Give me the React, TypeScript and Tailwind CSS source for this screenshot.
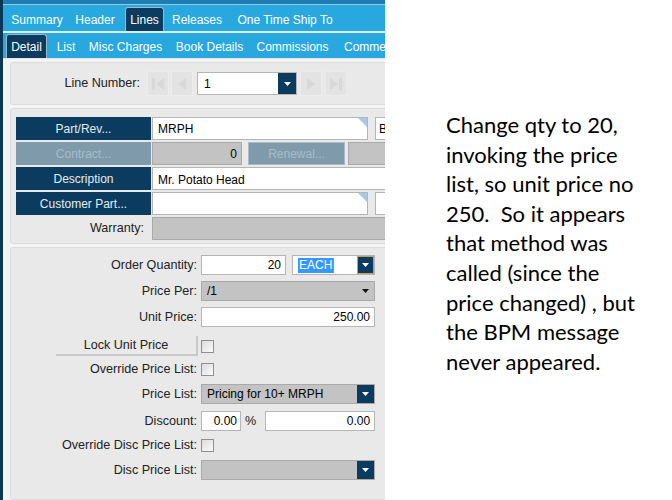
import React from "react";

const navy = "bg-[#0b3b5e]";

function Caret({ dark }: { dark?: boolean }) {
  return (
    <svg width="7" height="4" viewBox="0 0 7 4">
      <path d="M0 0 H7 L3.5 4 Z" fill={dark ? "#111" : "#fff"} />
    </svg>
  );
}

function NavBtn({ kind }: { kind: "first" | "prev" | "next" | "last" }) {
  return (
    <div className="w-[22px] h-[25px] shrink-0 bg-[#e3e3e3] border border-[#ececec] flex items-center justify-center">
      <svg width="14" height="16" viewBox="0 0 14 16">
        {kind === "first" && (
          <>
            <rect x="1" y="2" width="3" height="12" fill="#d8d8d8" />
            <path d="M13 2 L5 8 L13 14 Z" fill="#d8d8d8" />
          </>
        )}
        {kind === "prev" && <path d="M11 2 L3 8 L11 14 Z" fill="#d8d8d8" />}
        {kind === "next" && <path d="M3 2 L11 8 L3 14 Z" fill="#d8d8d8" />}
        {kind === "last" && (
          <>
            <path d="M1 2 L9 8 L1 14 Z" fill="#d8d8d8" />
            <rect x="10" y="2" width="3" height="12" fill="#d8d8d8" />
          </>
        )}
      </svg>
    </div>
  );
}

function Corner() {
  return (
    <svg className="absolute top-0 right-0" width="9" height="9" viewBox="0 0 9 9">
      <path d="M0 0 H9 V9 Z" fill="#a9c6e2" />
    </svg>
  );
}

function Check() {
  return <div className="w-[13px] h-[13px] shrink-0 border border-[#8f8f8f] bg-gradient-to-br from-[#dcdcdc] to-[#fafafa]" />;
}

function Label({ children, w = "w-[190px]" }: { children: React.ReactNode; w?: string }) {
  return (
    <div className={`${w} shrink-0 text-right pr-[4px] text-[#222] text-[12.6px] whitespace-nowrap`}>{children}</div>
  );
}

export default function App() {
  const tabs1 = [
    { label: "Summary", w: "w-[64px]" },
    { label: "Header", w: "w-[52px]" },
  ];
  const tabs1b = [
    { label: "Releases", w: "w-[66px]" },
    { label: "One Time Ship To", w: "w-[110px]" },
  ];
  const tabs2 = [
    { label: "List", w: "w-[38px]" },
    { label: "Misc Charges", w: "w-[81px]" },
    { label: "Book Details", w: "w-[87px]" },
    { label: "Commissions", w: "w-[79px]" },
  ];

  return (
    <div className="flex w-[672px] h-[500px] bg-white overflow-hidden">
      {/* ERP panel */}
      <div
        className="w-[385px] h-full shrink-0 overflow-hidden border-l-[3px] border-[#0b3656] bg-[#f3f3f3] flex flex-col text-[12px]"
        style={{ fontFamily: '"Liberation Sans", Arial, sans-serif' }}
      >
        <div className="h-[4px] bg-[#1f7db2] shrink-0" />
        <div className="h-[1px] bg-[#8fcbec] shrink-0" />
        {/* top tabs */}
        <div className="h-[26px] bg-[#29a8e0] flex items-end shrink-0 text-white whitespace-nowrap">
          <div className="w-[2px] shrink-0" />
          {tabs1.map((t) => (
            <div key={t.label} className={`${t.w} shrink-0 h-full flex items-center justify-center pt-[4px]`}>
              {t.label}
            </div>
          ))}
          <div className="ml-[4px] w-[39px] shrink-0 h-[24px] bg-[#0b3b5e] border border-b-0 border-[#9ab8cc] rounded-t-[3px] flex items-center justify-center">
            Lines
          </div>
          {tabs1b.map((t) => (
            <div key={t.label} className={`${t.w} shrink-0 h-full flex items-center justify-center pt-[4px]`}>
              {t.label}
            </div>
          ))}
        </div>
        <div className="h-[2px] bg-[#d8eef9] shrink-0" />
        {/* sub tabs */}
        <div className="h-[25px] bg-[#29a8e0] flex items-end shrink-0 text-white whitespace-nowrap">
          <div className="ml-[3px] w-[41px] shrink-0 h-[24px] bg-[#0b3b5e] border border-b-0 border-[#9ab8cc] rounded-t-[3px] flex items-center justify-center">
            Detail
          </div>
          {tabs2.map((t) => (
            <div key={t.label} className={`${t.w} shrink-0 h-full flex items-center justify-center pt-[2px]`}>
              {t.label}
            </div>
          ))}
          <div className="h-full shrink-0 flex items-center pl-[12px] pt-[2px]">Comments</div>
        </div>
        <div className="h-[1px] bg-[#e6e6e6] shrink-0" />

        {/* Line number box */}
        <div className="ml-[7px] mt-[3px] w-[420px] h-[43px] shrink-0 bg-[#e9e9e9] border border-[#dcdcdc] rounded-[3px] flex items-center">
          <Label w="w-[133px]">Line Number:</Label>
          <div className="ml-[3px] flex items-center gap-[2px] shrink-0">
            <NavBtn kind="first" />
            <NavBtn kind="prev" />
          </div>
          <div className="ml-[4px] w-[100px] shrink-0 h-[23px] bg-white border border-[#b5b5b5] flex items-center">
            <span className="pl-[6px] flex-1 text-black">1</span>
            <div className={`${navy} w-[18px] h-full flex items-center justify-center`}>
              <Caret />
            </div>
          </div>
          <div className="ml-[3px] flex items-center gap-[3px] shrink-0">
            <NavBtn kind="next" />
            <NavBtn kind="last" />
          </div>
        </div>

        {/* Part box */}
        <div className="ml-[7px] mt-[3px] w-[430px] shrink-0 bg-[#e9e9e9] border border-[#dcdcdc] rounded-[3px] pt-[8px] pb-[3px] pl-[5px] flex flex-col gap-[2px]">
          <div className="flex h-[23px]">
            <div className={`${navy} w-[135px] shrink-0 flex items-center justify-center text-[#e6edf2]`}>Part/Rev...</div>
            <div className="relative ml-[1px] w-[216px] shrink-0 bg-white border border-[#b5b5b5] flex items-center pl-[5px] text-black">
              MRPH
              <Corner />
            </div>
            <div className="ml-[7px] w-[60px] shrink-0 bg-white border border-[#b5b5b5] flex items-center pl-[3px] text-black">
              B
            </div>
          </div>
          <div className="flex h-[23px]">
            <div className="bg-[#7f9bab] w-[135px] shrink-0 flex items-center justify-center text-[#a8bcc8]">Contract...</div>
            <div className="ml-[1px] w-[90px] shrink-0 bg-[#c3c3c3] border border-[#a9a9a9] flex items-center justify-end pr-[4px] text-black">
              0
            </div>
            <div className="ml-[6px] w-[97px] shrink-0 bg-[#7f9bab] border border-[#a9bbc6] flex items-center justify-center text-[#a8bcc8]">
              Renewal...
            </div>
            <div className="ml-[3px] w-[80px] shrink-0 bg-[#c3c3c3] border border-[#a9a9a9]" />
          </div>
          <div className="flex h-[23px]">
            <div className={`${navy} w-[135px] shrink-0 flex items-center justify-center text-[#e6edf2]`}>Description</div>
            <div className="ml-[1px] w-[270px] shrink-0 bg-white border border-[#b5b5b5] pl-[5px] pt-[3px] text-black">
              Mr. Potato Head
            </div>
          </div>
          <div className="flex h-[23px]">
            <div className={`${navy} w-[135px] shrink-0 flex items-center justify-center text-[#e6edf2]`}>Customer Part...</div>
            <div className="relative ml-[1px] w-[216px] shrink-0 bg-white border border-[#b5b5b5]">
              <Corner />
            </div>
            <div className="ml-[7px] w-[60px] shrink-0 bg-white border border-[#b5b5b5]" />
          </div>
          <div className="flex h-[23px] items-center">
            <div className="w-[128px] shrink-0 text-right text-[#222] text-[12.6px]">Warranty:</div>
            <div className="ml-[8px] w-[270px] shrink-0 h-full bg-[#c3c3c3] border border-[#a9a9a9]" />
          </div>
        </div>

        {/* Pricing box */}
        <div className="ml-[7px] mt-[3px] w-[420px] flex-1 shrink-0 bg-[#e9e9e9] border border-[#dcdcdc] rounded-[3px] pt-[7px] flex flex-col">
          <div className="flex h-[20px] items-center">
            <Label>Order Quantity:</Label>
            <div className="w-[85px] shrink-0 h-full bg-white border border-[#b5b5b5] flex items-center justify-end pr-[4px] text-black">
              20
            </div>
            <div className="ml-[6px] w-[83px] shrink-0 h-full bg-white border border-[#b5b5b5] flex items-center">
              <span className="ml-[5px] bg-[#3399ff] text-white leading-[15px] px-[1px] border-r border-[#e08020]">EACH</span>
              <div className="flex-1" />
              <div className={`${navy} w-[17px] h-full border border-[#c9a24a] flex items-center justify-center`}>
                <Caret />
              </div>
            </div>
          </div>
          <div className="flex h-[20px] items-center mt-[6px]">
            <Label>Price Per:</Label>
            <div className="w-[174px] shrink-0 h-full bg-[#c3c3c3] border border-[#a9a9a9] flex items-center pl-[5px] text-black">
              <span className="flex-1">/1</span>
              <span className="mr-[5px] flex">
                <Caret dark />
              </span>
            </div>
          </div>
          <div className="flex h-[20px] items-center mt-[6px]">
            <Label>Unit Price:</Label>
            <div className="w-[174px] shrink-0 h-full bg-white border border-[#b5b5b5] flex items-center justify-end pr-[4px] text-black">
              250.00
            </div>
          </div>
          <div className="flex h-[20px] items-center mt-[9px]">
            <div className="w-[190px] shrink-0 flex justify-end pr-[3px]">
              <div className="w-[142px] h-[20px] bg-[#e9e9e9] border-r-2 border-b-2 border-[#c8c8c8] flex items-center justify-center text-[#222] text-[12.6px]">
                Lock Unit Price
              </div>
            </div>
            <Check />
          </div>
          <div className="flex h-[20px] items-center mt-[3px]">
            <Label>Override Price List:</Label>
            <Check />
          </div>
          <div className="flex h-[20px] items-center mt-[5px]">
            <Label>Price List:</Label>
            <div className="w-[174px] shrink-0 h-full bg-[#c3c3c3] border border-[#a9a9a9] flex items-center pl-[5px] text-black">
              <span className="flex-1">Pricing for 10+ MRPH</span>
              <div className={`${navy} w-[17px] h-full flex items-center justify-center`}>
                <Caret />
              </div>
            </div>
          </div>
          <div className="flex h-[20px] items-center mt-[7px]">
            <Label>Discount:</Label>
            <div className="w-[40px] shrink-0 h-full bg-white border border-[#b5b5b5] flex items-center justify-end pr-[3px] text-black">
              0.00
            </div>
            <span className="ml-[4px] text-[#222] text-[12.6px]">%</span>
            <div className="ml-[9px] w-[110px] shrink-0 h-full bg-white border border-[#b5b5b5] flex items-center justify-end pr-[4px] text-black">
              0.00
            </div>
          </div>
          <div className="flex h-[20px] items-center mt-[4px]">
            <Label>Override Disc Price List:</Label>
            <Check />
          </div>
          <div className="flex h-[20px] items-center mt-[5px]">
            <Label>Disc Price List:</Label>
            <div className="w-[174px] shrink-0 h-full bg-[#c3c3c3] border border-[#a9a9a9] flex items-center justify-end">
              <div className={`${navy} w-[17px] h-full flex items-center justify-center`}>
                <Caret />
              </div>
            </div>
          </div>
        </div>
      </div>

      {/* Note */}
      <div
        className="pl-[61px] pt-[110px] text-[22px] leading-[29.6px] text-black"
        style={{ fontFamily: "Lato, sans-serif" }}
      >
        <p>Change qty to 20,</p>
        <p>invoking the price</p>
        <p>list, so unit price no</p>
        <p>250.&nbsp; So it appears</p>
        <p>that method was</p>
        <p>called (since the</p>
        <p>price changed) , but</p>
        <p>the BPM message</p>
        <p>never appeared.</p>
      </div>
    </div>
  );
}
